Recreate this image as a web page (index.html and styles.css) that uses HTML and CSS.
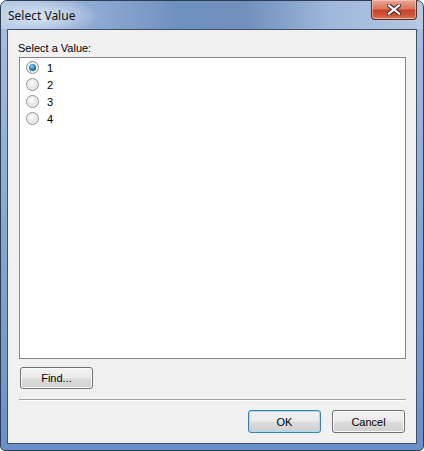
FILE: index.html
```html
<!DOCTYPE html>
<html lang="en">
<head>
    <meta charset="UTF-8">
    <title>Select Value</title>
    <link rel="stylesheet" href="styles.css">
</head>
<body>
    <div class="window">
        <div class="title-bar">
            <span class="title">Select Value</span>
            <button class="close-btn" aria-label="Close">
                <svg width="14" height="11" viewBox="0 0 14 11">
                    <path d="M2 1.5 L12 9.5 M12 1.5 L2 9.5" stroke="#3b2624" stroke-width="4.2" stroke-linecap="square"/>
                    <path d="M2 1.5 L12 9.5 M12 1.5 L2 9.5" stroke="#ffffff" stroke-width="2.2" stroke-linecap="square"/>
                </svg>
            </button>
        </div>
        <div class="client">
            <div class="label">Select a Value:</div>
            <div class="list">
                <label class="option"><span class="radio checked"></span>1</label>
                <label class="option"><span class="radio"></span>2</label>
                <label class="option"><span class="radio"></span>3</label>
                <label class="option"><span class="radio"></span>4</label>
            </div>
            <div class="find-row">
                <button class="btn">Find...</button>
            </div>
            <div class="separator"></div>
            <div class="actions">
                <button class="btn default">OK</button>
                <button class="btn">Cancel</button>
            </div>
        </div>
    </div>
</body>
</html>
```

FILE: styles.css
```css
body {
    margin: 0;
    background: #ffffff;
}

.window {
    width: 424px;
    height: 451px;
    box-sizing: border-box;
    border: 1px solid #2e3d52;
    border-radius: 7px 7px 5px 5px;
    padding: 0 6px 6px;
    display: flex;
    flex-direction: column;
    background: linear-gradient(180deg, #a8bfdf 0%, #90acd6 40%, #6a8fc8 100%);
    font-family: "Liberation Sans", Arial, sans-serif;
    font-size: 11px;
    color: #000;
}

.title-bar {
    height: 28px;
    margin: 0 -6px;
    padding: 0 6px 0 7px;
    display: flex;
    align-items: center;
    justify-content: space-between;
    border-radius: 6px 6px 0 0;
    background:
        radial-gradient(ellipse 60px 18px at 40px 15px, rgba(230, 238, 248, 0.8), rgba(230, 238, 248, 0) 100%),
        linear-gradient(90deg, #b7cae5 0%, #8eaad3 22%, #6f91c0 42%, #7090bd 58%, #9fb7da 78%, #b5c8e4 100%);
}

.title {
    font-family: "Noto Sans", "Open Sans", sans-serif;
    font-size: 12px;
    color: #111;
    margin-top: 1px;
}

.close-btn {
    align-self: flex-start;
    margin-top: -1px;
    width: 46px;
    height: 20px;
    padding: 0;
    border: 1px solid #5b2f2c;
    border-top: none;
    border-radius: 0 0 4px 4px;
    background: linear-gradient(180deg, #e9a896 0%, #d9775f 45%, #c7442a 55%, #cf5a3c 85%, #e0866a 100%);
    box-shadow: inset 0 0 0 1px rgba(255, 220, 210, 0.5);
    display: flex;
    align-items: center;
    justify-content: center;
}

.close-btn svg {
    display: block;
    margin-top: -1px;
}

.client {
    flex: 1;
    border: 1px solid #3e4f66;
    background: #f0f0f0;
    padding: 0 10px 0 11px;
    display: flex;
    flex-direction: column;
}

.label {
    padding-top: 12px;
    margin-left: -1px;
    height: 15px;
}

.list {
    height: 302px;
    box-sizing: border-box;
    border: 1px solid #828790;
    background: #ffffff;
    padding: 1px 0 0 6px;
}

.option {
    display: flex;
    align-items: center;
    height: 17px;
    gap: 8px;
}

.radio {
    width: 13px;
    height: 13px;
    box-sizing: border-box;
    border-radius: 50%;
    border: 1px solid #8e8f8f;
    background: radial-gradient(circle at 45% 40%, #ffffff 0%, #e8e8e8 45%, #cfcfcf 100%);
    box-shadow: inset 0 0 0 1px #f4f4f4;
    display: flex;
    align-items: center;
    justify-content: center;
}

.radio.checked::after {
    content: "";
    width: 7px;
    height: 7px;
    border-radius: 50%;
    background: radial-gradient(circle at 40% 35%, #8ad8f8 0%, #2a86bf 45%, #0d3f66 100%);
}

.find-row {
    padding-top: 8px;
    padding-left: 1px;
}

.btn {
    width: 73px;
    height: 22px;
    padding: 0;
    border: 1px solid #707070;
    border-radius: 3px;
    background: linear-gradient(180deg, #f2f2f2 0%, #ebebeb 48%, #dddddd 52%, #cfcfcf 100%);
    box-shadow: inset 0 0 0 1px #fcfcfc;
    font-family: "Liberation Sans", Arial, sans-serif;
    font-size: 11px;
    color: #000;
}

.btn.default {
    border-color: #3c7fb1;
    box-shadow: inset 0 0 0 1px #a7dbf5;
}

.separator {
    height: 1px;
    margin-top: 10px;
    background: #a0a0a0;
    box-shadow: 0 1px 0 #ffffff;
}

.actions {
    display: flex;
    justify-content: flex-end;
    gap: 11px;
    padding-top: 10px;
    padding-right: 1px;
}

.actions .btn {
    height: 23px;
}
```
